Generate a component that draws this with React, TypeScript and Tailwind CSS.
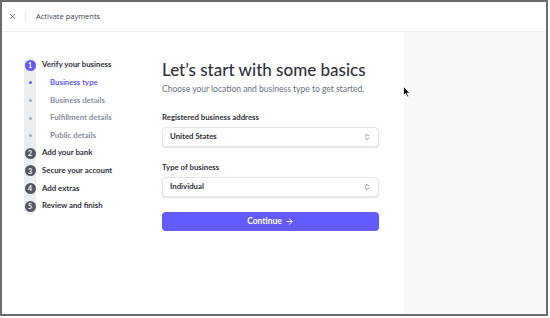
import { ChevronsUpDown, ArrowRight, X } from 'lucide-react';

type Step = { label: string; num?: number; sub?: boolean; active?: boolean; current?: boolean };

const steps: Step[] = [
  { label: 'Verify your business', num: 1, current: true },
  { label: 'Business type', sub: true, active: true },
  { label: 'Business details', sub: true },
  { label: 'Fulfillment details', sub: true },
  { label: 'Public details', sub: true },
  { label: 'Add your bank', num: 2 },
  { label: 'Secure your account', num: 3 },
  { label: 'Add extras', num: 4 },
  { label: 'Review and finish', num: 5 },
];

function Select({ label, value }: { label: string; value: string }) {
  return (
    <div className="flex flex-col">
      <span className="text-[7.8px] leading-[10px] font-bold text-[#30313d]">{label}</span>
      <div className="mt-[5px] h-[20px] flex items-center justify-between rounded-[4px] border border-[#e3e6ea] bg-white px-[7px] shadow-[0_1px_1.5px_rgba(0,0,0,0.12)]">
        <span className="text-[7.8px] font-bold text-[#30313d]">{value}</span>
        <ChevronsUpDown size={8} strokeWidth={2.2} className="text-[#545969]" />
      </div>
    </div>
  );
}

export default function App() {
  return (
    <div className="w-[550px] h-[318px] bg-white relative" style={{ fontFamily: 'Lato, "Noto Sans", sans-serif' }}>
      <div className="w-[548px] h-[316px] border-2 border-[#6b6b6b] flex flex-col overflow-hidden">
        {/* header */}
        <div className="h-[30px] shrink-0 flex items-center border-b border-[#eef0f2] pl-[6px]">
          <X size={9} strokeWidth={2} className="text-[#545969]" />
          <div className="ml-[8px] w-px h-[10px] bg-[#dfe2e6]" />
          <span className="ml-[10px] text-[7.5px] text-[#414552]" style={{ fontFamily: '"Open Sans", sans-serif' }}>
            Activate payments
          </span>
        </div>

        <div className="flex flex-1 min-h-0">
          {/* stepper */}
          <div className="w-[160px] shrink-0 pl-[22px] pt-[24.5px]">
            {steps.map((s, i) => (
              <div key={s.label} className="flex items-center h-[17.6px]">
                <div
                  className={`w-[12px] h-full bg-[#ebeef1] flex items-center justify-center ${
                    i === 0 ? 'rounded-t-full' : ''
                  } ${i === steps.length - 1 ? 'rounded-b-full' : ''}`}
                >
                  {s.num ? (
                    <div
                      className={`w-[11px] h-[11px] rounded-full flex items-center justify-center text-white text-[7px] font-bold ${
                        s.current ? 'bg-[#635bff]' : 'bg-[#545969]'
                      }`}
                    >
                      {s.num}
                    </div>
                  ) : (
                    <div className={`w-[3px] h-[3px] rounded-full ${s.active ? 'bg-[#635bff]' : 'bg-[#a3acba]'}`} />
                  )}
                </div>
                <span
                  className={`text-[7.8px] font-bold whitespace-nowrap ${s.sub ? 'ml-[14px]' : 'ml-[6px]'} ${
                    s.active ? 'text-[#635bff]' : s.sub ? 'text-[#87909f]' : 'text-[#30313d]'
                  }`}
                >
                  {s.label}
                </span>
              </div>
            ))}
          </div>

          {/* form */}
          <div className="w-[242px] shrink-0 pt-[27px]">
            <div className="w-[217px] flex flex-col">
              <h1 className="text-[17px] leading-[21px] font-medium text-[#30313d] whitespace-nowrap">
                Let’s start with some basics
              </h1>
              <p className="mt-[3px] text-[8.5px] leading-[12px] text-[#687385] whitespace-nowrap">
                Choose your location and business type to get started.
              </p>
              <div className="mt-[17px]">
                <Select label="Registered business address" value="United States" />
              </div>
              <div className="mt-[15px]">
                <Select label="Type of business" value="Individual" />
              </div>
              <button className="mt-[15px] h-[19px] rounded-[4px] bg-[#635bff] text-white text-[8.5px] font-bold flex items-center justify-center gap-[3px]">
                Continue
                <ArrowRight size={9} strokeWidth={2.5} />
              </button>
            </div>
          </div>

          {/* side panel */}
          <div className="flex-1 bg-[#f6f8fa]" />
        </div>
      </div>

      {/* mouse cursor */}
      <svg className="absolute left-[403px] top-[86px]" width="8" height="12" viewBox="0 0 8 12">
        <path d="M0.5 0.5 L0.5 9.5 L2.6 7.6 L4.2 11 L5.6 10.4 L4.1 7.1 L7 7.1 Z" fill="#111" stroke="#fff" strokeWidth="0.8" />
      </svg>
    </div>
  );
}
